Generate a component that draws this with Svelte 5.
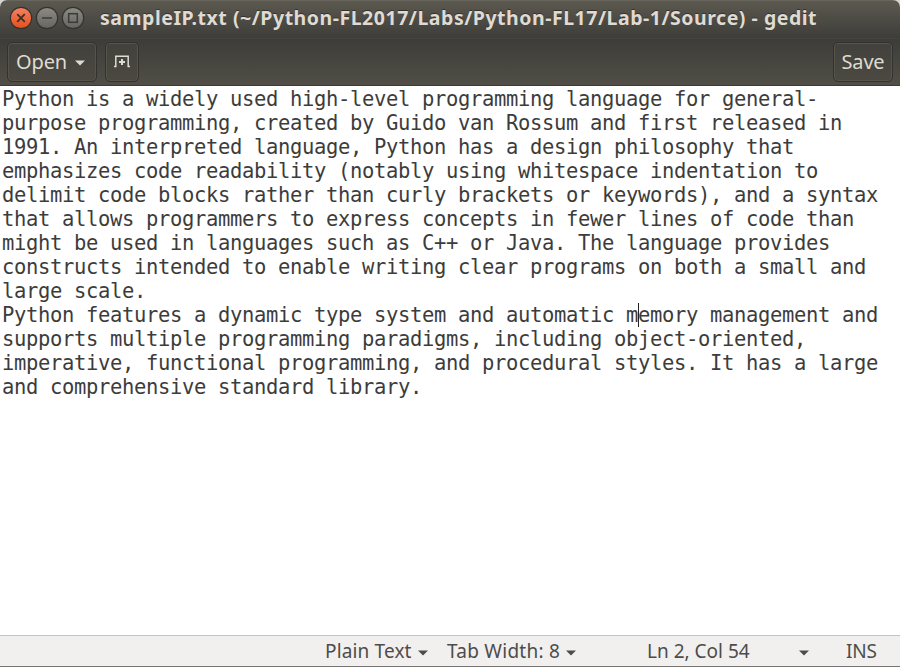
<script>
  const lines = [
    'Python is a widely used high-level programming language for general-',
    'purpose programming, created by Guido van Rossum and first released in',
    '1991. An interpreted language, Python has a design philosophy that',
    'emphasizes code readability (notably using whitespace indentation to',
    'delimit code blocks rather than curly brackets or keywords), and a syntax',
    'that allows programmers to express concepts in fewer lines of code than',
    'might be used in languages such as C++ or Java. The language provides',
    'constructs intended to enable writing clear programs on both a small and',
    'large scale.',
    'Python features a dynamic type system and automatic memory management and',
    'supports multiple programming paradigms, including object-oriented,',
    'imperative, functional programming, and procedural styles. It has a large',
    'and comprehensive standard library.'
  ];
  const caret = { line: 9, col: 53 };
</script>

{#snippet arrow()}
  <svg class="arrow" width="10" height="6" viewBox="0 0 10 6"><path d="M0 .5H10L5 5.5Z" fill="currentColor" /></svg>
{/snippet}

<div class="window">
  <header class="titlebar">
    <div class="controls">
      <svg width="24" height="24" viewBox="0 0 24 24">
        <defs>
          <linearGradient id="red" x1="0" y1="0" x2="0" y2="1"><stop offset="0" stop-color="#f58262" /><stop offset="1" stop-color="#e34f1c" /></linearGradient>
          <linearGradient id="grey" x1="0" y1="0" x2="0" y2="1"><stop offset="0" stop-color="#8c8b84" /><stop offset="1" stop-color="#656460" /></linearGradient>
        </defs>
        <circle cx="12" cy="12" r="10.7" fill="url(#red)" stroke="#33322e" stroke-width="1.2" />
        <path d="M8.2 8.2L15.8 15.8M15.8 8.2L8.2 15.8" stroke="#3c2f29" stroke-width="1.8" />
      </svg>
      <svg width="24" height="24" viewBox="0 0 24 24">
        <circle cx="12" cy="12" r="10.7" fill="url(#grey)" stroke="#33322e" stroke-width="1.2" />
        <path d="M7 12H17" stroke="#3c3b37" stroke-width="1.6" />
      </svg>
      <svg width="24" height="24" viewBox="0 0 24 24">
        <circle cx="12" cy="12" r="10.7" fill="url(#grey)" stroke="#33322e" stroke-width="1.2" />
        <rect x="7.7" y="7.7" width="8.6" height="8.6" fill="none" stroke="#3c3b37" stroke-width="1.5" />
      </svg>
    </div>
    <h1>sampleIP.txt (~/Python-FL2017/Labs/Python-FL17/Lab-1/Source) - gedit</h1>
  </header>

  <div class="toolbar">
    <button class="open"><span>Open</span>{@render arrow()}</button>
    <button class="new" aria-label="New tab">
      <svg width="16" height="13" viewBox="0 0 16 13" fill="none" stroke="#dfdbd2" stroke-width="1.5">
        <path d="M0 11.5H1.8V1.2H14.2V11.5H16" />
        <path d="M8 4V10M5 7H11" stroke-width="2" />
      </svg>
    </button>
    <button class="save"><span>Save</span></button>
  </div>

  <main>
    {#each lines as line, i}
      <div class="line">{#if i === caret.line}{line.slice(0, caret.col)}<i class="caret"></i>{line.slice(caret.col)}{:else}{line}{/if}</div>
    {/each}
  </main>

  <footer>
    <div class="item lang"><span>Plain Text</span>{@render arrow()}</div>
    <div class="item tab"><span>Tab Width: 8</span>{@render arrow()}</div>
    <div class="item pos"><span>Ln 2, Col 54</span>{@render arrow()}</div>
    <div class="item ins"><span>INS</span></div>
  </footer>
</div>

<style>
  .window {
    width: 900px;
    height: 667px;
    box-sizing: border-box;
    display: flex;
    flex-direction: column;
    overflow: hidden;
    background: #fff;
    border-bottom: 1px solid #767573;
    border-radius: 7px 7px 0 0;
    font-family: 'Noto Sans', sans-serif;
  }
  :global(body) { background: #d5d5d5; }
  .titlebar {
    height: 38px;
    flex: none;
    box-sizing: border-box;
    display: flex;
    align-items: center;
    padding: 0 0 3px 9px;
    background: linear-gradient(#5b594f, #3e3d39);
    border-top: 1px solid #68665c;
  }
  .controls { display: flex; gap: 2px; }
  .controls svg { display: block; }
  h1 {
    margin: 0 0 0 15px;
    font-size: 19.5px;
    line-height: 30px;
    font-weight: 700;
    letter-spacing: 0.52px;
    color: #dfdbd2;
    white-space: nowrap;
    text-shadow: 0 -1px 0 #33322e;
  }
  .toolbar {
    height: 48px;
    flex: none;
    box-sizing: border-box;
    display: flex;
    align-items: center;
    padding: 0 7px 0 7px;
    background: linear-gradient(#3d3c38, #504e46);
    border-bottom: 1px solid #3b3a36;
    box-shadow: inset 0 1px #44433e;
  }
  button {
    box-sizing: border-box;
    height: 40px;
    display: flex;
    align-items: center;
    justify-content: center;
    padding: 0;
    border: 1px solid #33322e;
    border-radius: 5px;
    background: linear-gradient(#42413c, #4b4941);
    box-shadow: inset 0 0 0 1px #55534a;
    color: #dfdbd2;
    font-family: inherit;
    font-size: 20px;
    line-height: 28px;
    white-space: nowrap;
  }
  .open { width: 90px; gap: 8px; padding-right: 3px; letter-spacing: -0.2px; }
  .new { width: 34px; margin-left: 8px; }
  .new svg { margin-top: -1px; }
  .save { width: 60px; margin-left: auto; letter-spacing: -0.2px; }
  .arrow { flex: none; margin-top: 3px; }
  main {
    flex: 1;
    padding: 1px 0 0 2px;
    font-family: 'DejaVu Sans Mono', monospace;
    font-size: 20.5px;
    letter-spacing: -0.342px;
    color: #3c3c3c;
  }
  .line { height: 24px; line-height: 24px; white-space: pre; }
  .caret {
    display: inline-block;
    width: 1px;
    height: 24px;
    margin-right: -1px;
    vertical-align: top;
    background: #222;
  }
  footer {
    height: 31px;
    flex: none;
    box-sizing: border-box;
    display: flex;
    align-items: center;
    padding-left: 325px;
    border-top: 1px solid #c5c4c2;
    background: #f1f0ee;
    color: #4c4c4c;
    font-size: 19px;
    line-height: 28px;
    white-space: nowrap;
  }
  .item { display: flex; align-items: center; justify-content: space-between; flex: none; }
  .lang { width: 103px; letter-spacing: 0.15px; }
  .tab { width: 129px; margin-left: 19px; letter-spacing: 0.25px; }
  .pos { width: 162px; margin-left: 71px; }
  .ins { margin-left: 37px; letter-spacing: -0.2px; }
</style>
